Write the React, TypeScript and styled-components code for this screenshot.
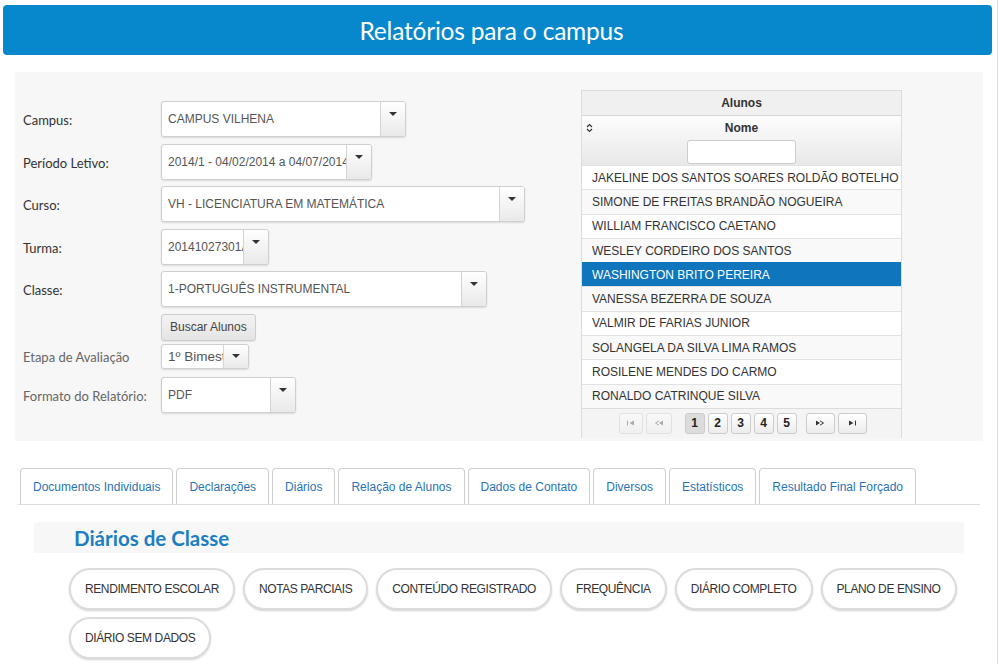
import React from 'react';
import styled, { createGlobalStyle, css } from 'styled-components';

const GlobalStyle = createGlobalStyle`
  body {
    margin: 0;
    background: #fff;
    font-family: "Liberation Sans", Arial, sans-serif;
  }
  * { box-sizing: border-box; }
`;

const Page = styled.div`
  width: 998px;
  min-height: 664px;
  border-right: 1px solid #dcdcdc;
  padding-top: 5px;
`;

const Header = styled.div`
  margin: 0 5px 0 3px;
  height: 50px;
  padding-right: 12px;
  background: #0788cc;
  border-radius: 4px;
  display: flex;
  align-items: center;
  justify-content: center;
  color: #fff;
  font-family: Lato, "Open Sans", sans-serif;
  font-size: 24.5px;
  letter-spacing: -0.2px;
`;

const Panel = styled.div`
  margin: 17px 14px 0 15px;
  height: 369px;
  background: #f7f7f7;
  display: flex;
`;

const Form = styled.div`
  width: 566px;
  padding: 29px 0 0 8px;
`;

const FormRow = styled.div<{ $gap?: number }>`
  display: grid;
  grid-template-columns: 138px auto;
  align-items: center;
  margin-bottom: ${(p) => (p.$gap ?? 6.5)}px;
`;

const Label = styled.span<{ $muted?: boolean }>`
  font-family: Lato, "Open Sans", sans-serif;
  font-size: 13px;
  color: ${(p) => (p.$muted ? '#666' : '#333')};
  padding-top: 2px;
`;

const SelectBox = styled.div<{ $w: number; $h: number }>`
  width: ${(p) => p.$w}px;
  height: ${(p) => p.$h}px;
  display: flex;
  background: #fff;
  border: 1px solid #cfcfcf;
  border-radius: 3px;
  box-shadow: 0 1px 2px rgba(0, 0, 0, 0.12);
  overflow: hidden;
`;

const SelectText = styled.div<{ $size: number }>`
  flex: 1;
  min-width: 0;
  padding-left: 6px;
  display: flex;
  align-items: center;
  white-space: nowrap;
  overflow: hidden;
  font-size: ${(p) => p.$size}px;
  color: #555;
`;

const SelectArrow = styled.div<{ $top: number }>`
  width: 25px;
  flex: none;
  border-left: 1px solid #d4d4d4;
  background: linear-gradient(#ffffff, #e9e9e9);
  display: flex;
  justify-content: center;
  padding-top: ${(p) => p.$top}px;

  &::after {
    content: '';
    width: 0;
    height: 0;
    border-left: 4px solid transparent;
    border-right: 4px solid transparent;
    border-top: 4px solid #333;
  }
`;

const PlainButton = styled.button`
  justify-self: start;
  height: 27px;
  margin: 0;
  padding: 0 8px;
  border: 1px solid #cdcdcd;
  border-radius: 3px;
  background: linear-gradient(#f3f3f3, #e4e4e4);
  font-family: "Liberation Sans", Arial, sans-serif;
  font-size: 12px;
  color: #444;
  white-space: nowrap;
  box-shadow: 0 1px 1px rgba(0, 0, 0, 0.08);
`;

const TableCol = styled.div`
  margin-top: 18px;
  width: 321px;
`;

const Grid = styled.div`
  border: 1px solid #dcdcdc;
  border-bottom: none;
`;

const Caption = styled.div`
  height: 25px;
  background: #f0f0f0;
  display: flex;
  align-items: center;
  justify-content: center;
  font-size: 12px;
  font-weight: bold;
  color: #333;
  border-bottom: 1px solid #d6d6d6;
`;

const ColHeader = styled.div`
  position: relative;
  height: 49px;
  background: linear-gradient(#fdfdfd, #e8e8e8);
  display: flex;
  flex-direction: column;
  align-items: center;
  padding-top: 5px;
  font-size: 12px;
  font-weight: bold;
  color: #333;
`;

const SortIcon = styled.svg`
  position: absolute;
  left: 4px;
  top: 7px;
`;

const FilterInput = styled.div`
  margin-top: 5px;
  width: 109px;
  height: 24px;
  background: #fff;
  border: 1px solid #ccc;
  border-radius: 3px;
`;

const Row = styled.div<{ $selected?: boolean; $alt?: boolean }>`
  height: 24.3px;
  display: flex;
  align-items: center;
  padding-left: 10px;
  border-top: 1px solid #e2e2e2;
  font-size: 12px;
  color: #333;
  white-space: nowrap;
  background: ${(p) => (p.$alt ? '#f9f9f9' : '#fff')};
  ${(p) =>
    p.$selected &&
    css`
      background: #0f75bc;
      color: #fff;
      border-top-color: #0f75bc;
    `}
`;

const Paginator = styled.div`
  height: 30px;
  border-top: 1px solid #dcdcdc;
  background: #f4f4f4;
  display: flex;
  align-items: center;
  justify-content: center;
  gap: 3px;
  padding-left: 2px;
`;

const PageBtn = styled.div<{ $active?: boolean; $disabled?: boolean; $w?: number }>`
  width: ${(p) => p.$w ?? 20}px;
  height: 21px;
  border: 1px solid #ccc;
  border-radius: 3px;
  background: ${(p) => (p.$active ? '#dcdcdc' : 'linear-gradient(#ffffff, #ececec)')};
  display: flex;
  align-items: center;
  justify-content: center;
  font-size: 12px;
  font-weight: bold;
  color: #222;
  opacity: ${(p) => (p.$disabled ? 0.45 : 1)};
`;

const PageSpacer = styled.div<{ $w: number }>`
  width: ${(p) => p.$w}px;
`;

const Tabs = styled.div`
  margin: 27px 17px 0 18px;
  padding-left: 2px;
  display: flex;
  gap: 3px;
  border-bottom: 1px solid #ddd;
`;

const Tab = styled.div`
  height: 36px;
  padding: 0 12px;
  border: 1px solid #cfcfcf;
  border-bottom: none;
  border-radius: 4px 4px 0 0;
  background: #fff;
  display: flex;
  align-items: center;
  font-size: 12px;
  color: #2874b5;
  white-space: nowrap;
`;

const SectionBand = styled.div`
  margin: 17px 0 0 34px;
  width: 930px;
  height: 31px;
  background: #f7f7f7;
  display: flex;
  align-items: center;
  padding-left: 40px;
`;

const SectionTitle = styled.h2`
  margin: 0;
  font-family: Lato, "Open Sans", sans-serif;
  font-size: 20.5px;
  font-weight: bold;
  color: #1b7fc2;
`;

const Pills = styled.div`
  margin: 15px 0 0 69px;
  width: 910px;
  display: flex;
  flex-wrap: wrap;
  gap: 7px 8px;
`;

const Pill = styled.button`
  height: 42px;
  margin: 0;
  padding: 0 14px;
  border: 2px solid #dcdcdc;
  border-radius: 21px;
  background: #fff;
  box-shadow: 0 1px 2px rgba(0, 0, 0, 0.18);
  font-family: "Liberation Sans", Arial, sans-serif;
  font-size: 12px;
  letter-spacing: -0.4px;
  color: #333;
  white-space: nowrap;
`;

const Select = ({
  w,
  h = 36,
  size = 12,
  value,
}: {
  w: number;
  h?: number;
  size?: number;
  value: string;
}) => (
  <SelectBox $w={w} $h={h}>
    <SelectText $size={size}>{value}</SelectText>
    <SelectArrow $top={h > 30 ? 10 : 9} />
  </SelectBox>
);

const alunos = [
  'JAKELINE DOS SANTOS SOARES ROLDÃO BOTELHO',
  'SIMONE DE FREITAS BRANDÃO NOGUEIRA',
  'WILLIAM FRANCISCO CAETANO',
  'WESLEY CORDEIRO DOS SANTOS',
  'WASHINGTON BRITO PEREIRA',
  'VANESSA BEZERRA DE SOUZA',
  'VALMIR DE FARIAS JUNIOR',
  'SOLANGELA DA SILVA LIMA RAMOS',
  'ROSILENE MENDES DO CARMO',
  'RONALDO CATRINQUE SILVA',
];

const tabs = [
  'Documentos Individuais',
  'Declarações',
  'Diários',
  'Relação de Alunos',
  'Dados de Contato',
  'Diversos',
  'Estatísticos',
  'Resultado Final Forçado',
];

const relatorios = [
  'RENDIMENTO ESCOLAR',
  'NOTAS PARCIAIS',
  'CONTEÚDO REGISTRADO',
  'FREQUÊNCIA',
  'DIÁRIO COMPLETO',
  'PLANO DE ENSINO',
  'DIÁRIO SEM DADOS',
];

const NavIcon = ({ kind }: { kind: 'first' | 'prev' | 'next' | 'last' }) => (
  <svg width="10" height="6" viewBox="0 0 10 6">
    {kind === 'first' && (
      <>
        <rect x="1" y="0.5" width="1" height="5" fill="#555" />
        <polygon points="8,0.5 3.5,3 8,5.5" fill="#555" />
      </>
    )}
    {kind === 'prev' && (
      <>
        <polyline points="5,0.8 1.5,3 5,5.2" fill="none" stroke="#555" strokeWidth="1" />
        <polygon points="9,0.5 5,3 9,5.5" fill="#555" />
      </>
    )}
    {kind === 'next' && (
      <>
        <polygon points="1,0.5 5,3 1,5.5" fill="#333" />
        <polyline points="5,0.8 8.5,3 5,5.2" fill="none" stroke="#333" strokeWidth="1" />
      </>
    )}
    {kind === 'last' && (
      <>
        <polygon points="2,0.5 6.5,3 2,5.5" fill="#333" />
        <rect x="8" y="0.5" width="1" height="5" fill="#333" />
      </>
    )}
  </svg>
);

const App: React.FC = () => {
  return (
    <Page>
      <GlobalStyle />
      <Header>Relatórios para o campus</Header>

      <Panel>
        <Form>
          <FormRow>
            <Label>Campus:</Label>
            <Select w={245} value="CAMPUS VILHENA" />
          </FormRow>
          <FormRow>
            <Label>Período Letivo:</Label>
            <Select w={211} value="2014/1 - 04/02/2014 a 04/07/2014" />
          </FormRow>
          <FormRow>
            <Label>Curso:</Label>
            <Select w={364} value="VH - LICENCIATURA EM MATEMÁTICA" />
          </FormRow>
          <FormRow>
            <Label>Turma:</Label>
            <Select w={108} value="20141027301A" />
          </FormRow>
          <FormRow>
            <Label>Classe:</Label>
            <Select w={326} value="1-PORTUGUÊS INSTRUMENTAL" />
          </FormRow>
          <FormRow $gap={3}>
            <span />
            <PlainButton>Buscar Alunos</PlainButton>
          </FormRow>
          <FormRow $gap={8}>
            <Label $muted>Etapa de Avaliação</Label>
            <Select w={88} h={25} size={13.5} value="1º Bimestre" />
          </FormRow>
          <FormRow>
            <Label $muted>Formato do Relatório:</Label>
            <Select w={135} h={36} value="PDF" />
          </FormRow>
        </Form>

        <TableCol>
          <Grid>
            <Caption>Alunos</Caption>
            <ColHeader>
              <SortIcon width="7" height="10" viewBox="0 0 7 10">
                <polyline points="1,4 3.5,1.5 6,4" fill="none" stroke="#333" strokeWidth="1.2" />
                <polyline points="1,6 3.5,8.5 6,6" fill="none" stroke="#333" strokeWidth="1.2" />
              </SortIcon>
              Nome
              <FilterInput />
            </ColHeader>
            {alunos.map((nome, i) => (
              <Row key={nome} $selected={i === 4} $alt={i % 2 === 1}>
                {nome}
              </Row>
            ))}
            <Paginator>
              <PageBtn $w={24} $disabled>
                <NavIcon kind="first" />
              </PageBtn>
              <PageBtn $w={26} $disabled>
                <NavIcon kind="prev" />
              </PageBtn>
              <PageSpacer $w={7} />
              <PageBtn $active>1</PageBtn>
              <PageBtn>2</PageBtn>
              <PageBtn>3</PageBtn>
              <PageBtn>4</PageBtn>
              <PageBtn>5</PageBtn>
              <PageSpacer $w={3} />
              <PageBtn $w={29}>
                <NavIcon kind="next" />
              </PageBtn>
              <PageBtn $w={29}>
                <NavIcon kind="last" />
              </PageBtn>
            </Paginator>
          </Grid>
        </TableCol>
      </Panel>

      <Tabs>
        {tabs.map((t) => (
          <Tab key={t}>{t}</Tab>
        ))}
      </Tabs>

      <SectionBand>
        <SectionTitle>Diários de Classe</SectionTitle>
      </SectionBand>

      <Pills>
        {relatorios.map((r) => (
          <Pill key={r}>{r}</Pill>
        ))}
      </Pills>
    </Page>
  );
};

export default App;
